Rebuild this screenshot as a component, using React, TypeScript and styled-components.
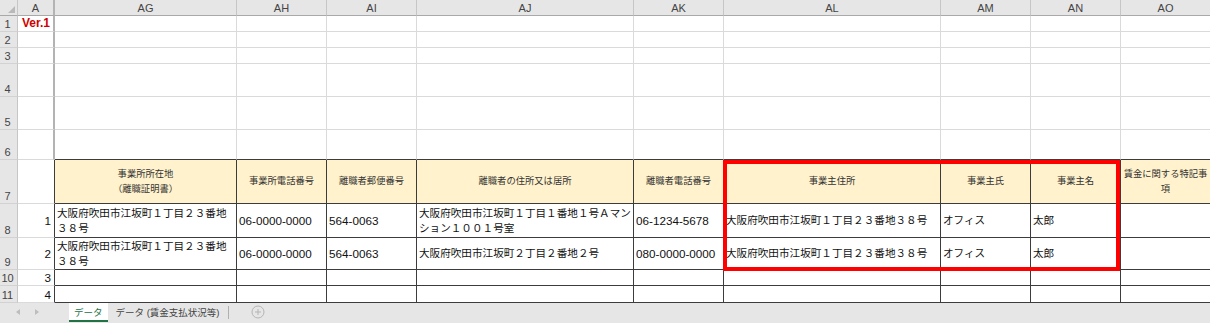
import styled, { createGlobalStyle } from "styled-components";

const GlobalStyle = createGlobalStyle`
  html, body {
    margin: 0;
    padding: 0;
    background: #ffffff;
  }
  body {
    font-family: "Liberation Sans", "Noto Sans CJK JP", sans-serif;
  }
`;

type Tone = "light" | "dark" | "marker" | "head";

const lineColors: Record<Tone, string> = {
    light: "#dadada",
    dark: "#3c3c3c",
    marker: "#b3b3b3",
    head: "#c6c6c6",
};

const columns = [
    { key: "A", width: 37 },
    { key: "AG", width: 182 },
    { key: "AH", width: 90 },
    { key: "AI", width: 90 },
    { key: "AJ", width: 217 },
    { key: "AK", width: 90 },
    { key: "AL", width: 217 },
    { key: "AM", width: 90 },
    { key: "AN", width: 90 },
    { key: "AO", width: 90 },
];

const rowHeights = [16, 16, 16, 33, 33, 30, 44, 34, 32, 16, 17];

const headings = [
    "",
    "事業所所在地\n（離職証明書）",
    "事業所電話番号",
    "離職者郵便番号",
    "離職者の住所又は居所",
    "離職者電話番号",
    "事業主住所",
    "事業主氏",
    "事業主名",
    "賃金に関する特記事項",
];

const records = [
    ["1", "大阪府吹田市江坂町１丁目２３番地３８号", "06-0000-0000", "564-0063", "大阪府吹田市江坂町１丁目１番地１号Ａマンション１００１号室", "06-1234-5678", "大阪府吹田市江坂町１丁目２３番地３８号", "オフィス", "太郎", ""],
    ["2", "大阪府吹田市江坂町１丁目２３番地３８号", "06-0000-0000", "564-0063", "大阪府吹田市江坂町２丁目２番地２号", "080-0000-0000", "大阪府吹田市江坂町１丁目２３番地３８号", "オフィス", "太郎", ""],
    ["3", "", "", "", "", "", "", "", "", ""],
    ["4", "", "", "", "", "", "", "", "", ""],
];

const Page = styled.div`
    display: flex;
    flex-direction: column;
    width: 1210px;
    height: 323px;
    overflow: hidden;
`;

const Sheet = styled.div<{ $cols: string; $rows: string }>`
    position: relative;
    display: grid;
    grid-template-columns: ${(p) => p.$cols};
    grid-template-rows: ${(p) => p.$rows};
    width: 1210px;
    overflow: hidden;
`;

const Corner = styled.div`
    position: relative;
    box-sizing: border-box;
    background: #e6e6e6;
    border-right: 1px solid #c6c6c6;
    border-bottom: 1px solid #a9a9a9;

    &::after {
        content: "";
        position: absolute;
        right: 2px;
        bottom: 2px;
        border-left: 7px solid transparent;
        border-bottom: 7px solid #b9b9b9;
    }
`;

const ColHead = styled.div<{ $right: Tone }>`
    box-sizing: border-box;
    display: flex;
    justify-content: center;
    align-items: center;
    background: #e6e6e6;
    border-right: ${(p) => (p.$right === "marker" ? 2 : 1)}px solid ${(p) => lineColors[p.$right]};
    border-bottom: 1px solid #a9a9a9;
    color: #444444;
    font-size: 11px;
    white-space: nowrap;
`;

const RowHead = styled.div`
    box-sizing: border-box;
    display: flex;
    justify-content: center;
    align-items: flex-end;
    padding: 0 2px 0 0;
    background: #e6e6e6;
    border-right: 1px solid #c6c6c6;
    border-bottom: 1px solid #d2d2d2;
    color: #444444;
    font-size: 11px;
    line-height: 14px;
`;

const Cell = styled.div<{ $right: Tone; $bottom: Tone; $latin?: boolean; $align?: string }>`
    box-sizing: border-box;
    display: flex;
    align-items: center;
    justify-content: ${(p) => (p.$align === "right" ? "flex-end" : "flex-start")};
    padding: 0 ${(p) => (p.$align === "right" ? 3 : 0)}px 0 2px;
    background: #ffffff;
    border-right: ${(p) => (p.$right === "marker" ? 2 : 1)}px solid ${(p) => lineColors[p.$right]};
    border-bottom: 1px solid ${(p) => lineColors[p.$bottom]};
    color: #111111;
    font-size: ${(p) => (p.$latin ? "11.7px" : "10.6px")};
    line-height: 15px;
    overflow: hidden;
`;

const HeadCell = styled.div`
    box-sizing: border-box;
    display: flex;
    justify-content: center;
    align-items: center;
    padding: 0 1px;
    background: #fff2cc;
    border-right: 1px solid ${lineColors.dark};
    border-bottom: 1px solid ${lineColors.dark};
    color: #333333;
    font-size: 9.3px;
    line-height: 15px;
    text-align: center;
    white-space: pre-line;
`;

const Version = styled.span`
    color: #d00000;
    font-weight: bold;
    font-size: 12px;
    padding-left: 2px;
`;

const Highlight = styled.div`
    position: absolute;
    left: 723px;
    top: 160px;
    width: 397px;
    height: 111px;
    box-sizing: border-box;
    border: 4px solid #ff0000;
    pointer-events: none;
`;

const TabBar = styled.div`
    display: flex;
    align-items: flex-start;
    height: 20px;
    background: #e6e6e6;
    font-size: 9.5px;
`;

const Nav = styled.div`
    display: flex;
    align-items: center;
    gap: 15px;
    width: 53px;
    height: 18px;
    padding-left: 16px;
    color: #bdbdbd;
`;

const Tab = styled.div<{ $active?: boolean }>`
    display: flex;
    align-items: center;
    box-sizing: border-box;
    height: 19px;
    padding: ${(p) => (p.$active ? "0 5px" : "0 8px")};
    background: ${(p) => (p.$active ? "#ffffff" : "transparent")};
    border-bottom: 2px solid ${(p) => (p.$active ? "#217346" : "transparent")};
    color: ${(p) => (p.$active ? "#217346" : "#444444")};
    white-space: nowrap;
`;

const Divider = styled.div`
    width: 1px;
    height: 13px;
    margin: 3px 0 0 1px;
    background: #b0b0b0;
`;

const AddButton = styled.div`
    display: flex;
    align-items: center;
    height: 18px;
    margin-left: 22px;
`;

const Arrow = ({ dir }: { dir: "left" | "right" }) => (
    <svg width="4" height="6" viewBox="0 0 4 6">
        <polygon points={dir === "left" ? "4,0 0,3 4,6" : "0,0 4,3 0,6"} fill="currentColor" />
    </svg>
);

function App() {
    const cols = ["18px", ...columns.map((c) => `${c.width}px`)].join(" ");
    const rows = ["16px", ...rowHeights.map((h) => `${h}px`)].join(" ");

    const renderCell = (r: number, c: number) => {
        const key = `${r}-${c}`;
        const right: Tone = c === 0 ? (r >= 7 ? "dark" : "marker") : r >= 7 ? "dark" : "light";
        const bottom: Tone = c >= 1 && r >= 6 ? "dark" : "light";

        if (r === 7 && c >= 1) {
            return <HeadCell key={key}>{headings[c]}</HeadCell>;
        }
        if (r === 1 && c === 0) {
            return (
                <Cell key={key} $right={right} $bottom={bottom}>
                    <Version>Ver.1</Version>
                </Cell>
            );
        }
        if (r >= 8) {
            const value = records[r - 8][c];
            const latin = /^[0-9-]*$/.test(value);
            return (
                <Cell key={key} $right={right} $bottom={bottom} $latin={latin} $align={c === 0 ? "right" : "left"}>
                    {value}
                </Cell>
            );
        }
        return <Cell key={key} $right={right} $bottom={bottom} />;
    };

    return (
        <Page>
            <GlobalStyle />
            <Sheet $cols={cols} $rows={rows}>
                <Corner />
                {columns.map((c, i) => (
                    <ColHead key={c.key} $right={i === 0 ? "marker" : "head"}>
                        {c.key}
                    </ColHead>
                ))}
                {rowHeights.map((_, ri) => {
                    const r = ri + 1;
                    return [
                        <RowHead key={`h${r}`}>{r}</RowHead>,
                        ...columns.map((_, c) => renderCell(r, c)),
                    ];
                })}
                <Highlight />
            </Sheet>
            <TabBar>
                <Nav>
                    <Arrow dir="left" />
                    <Arrow dir="right" />
                </Nav>
                <Tab $active>データ</Tab>
                <Tab>データ (賃金支払状況等)</Tab>
                <Divider />
                <AddButton>
                    <svg width="14" height="14" viewBox="0 0 14 14">
                        <circle cx="7" cy="7" r="6" fill="none" stroke="#b5b5b5" strokeWidth="1" />
                        <path d="M7 4v6M4 7h6" stroke="#b5b5b5" strokeWidth="1" />
                    </svg>
                </AddButton>
            </TabBar>
        </Page>
    );
}

export default App;
